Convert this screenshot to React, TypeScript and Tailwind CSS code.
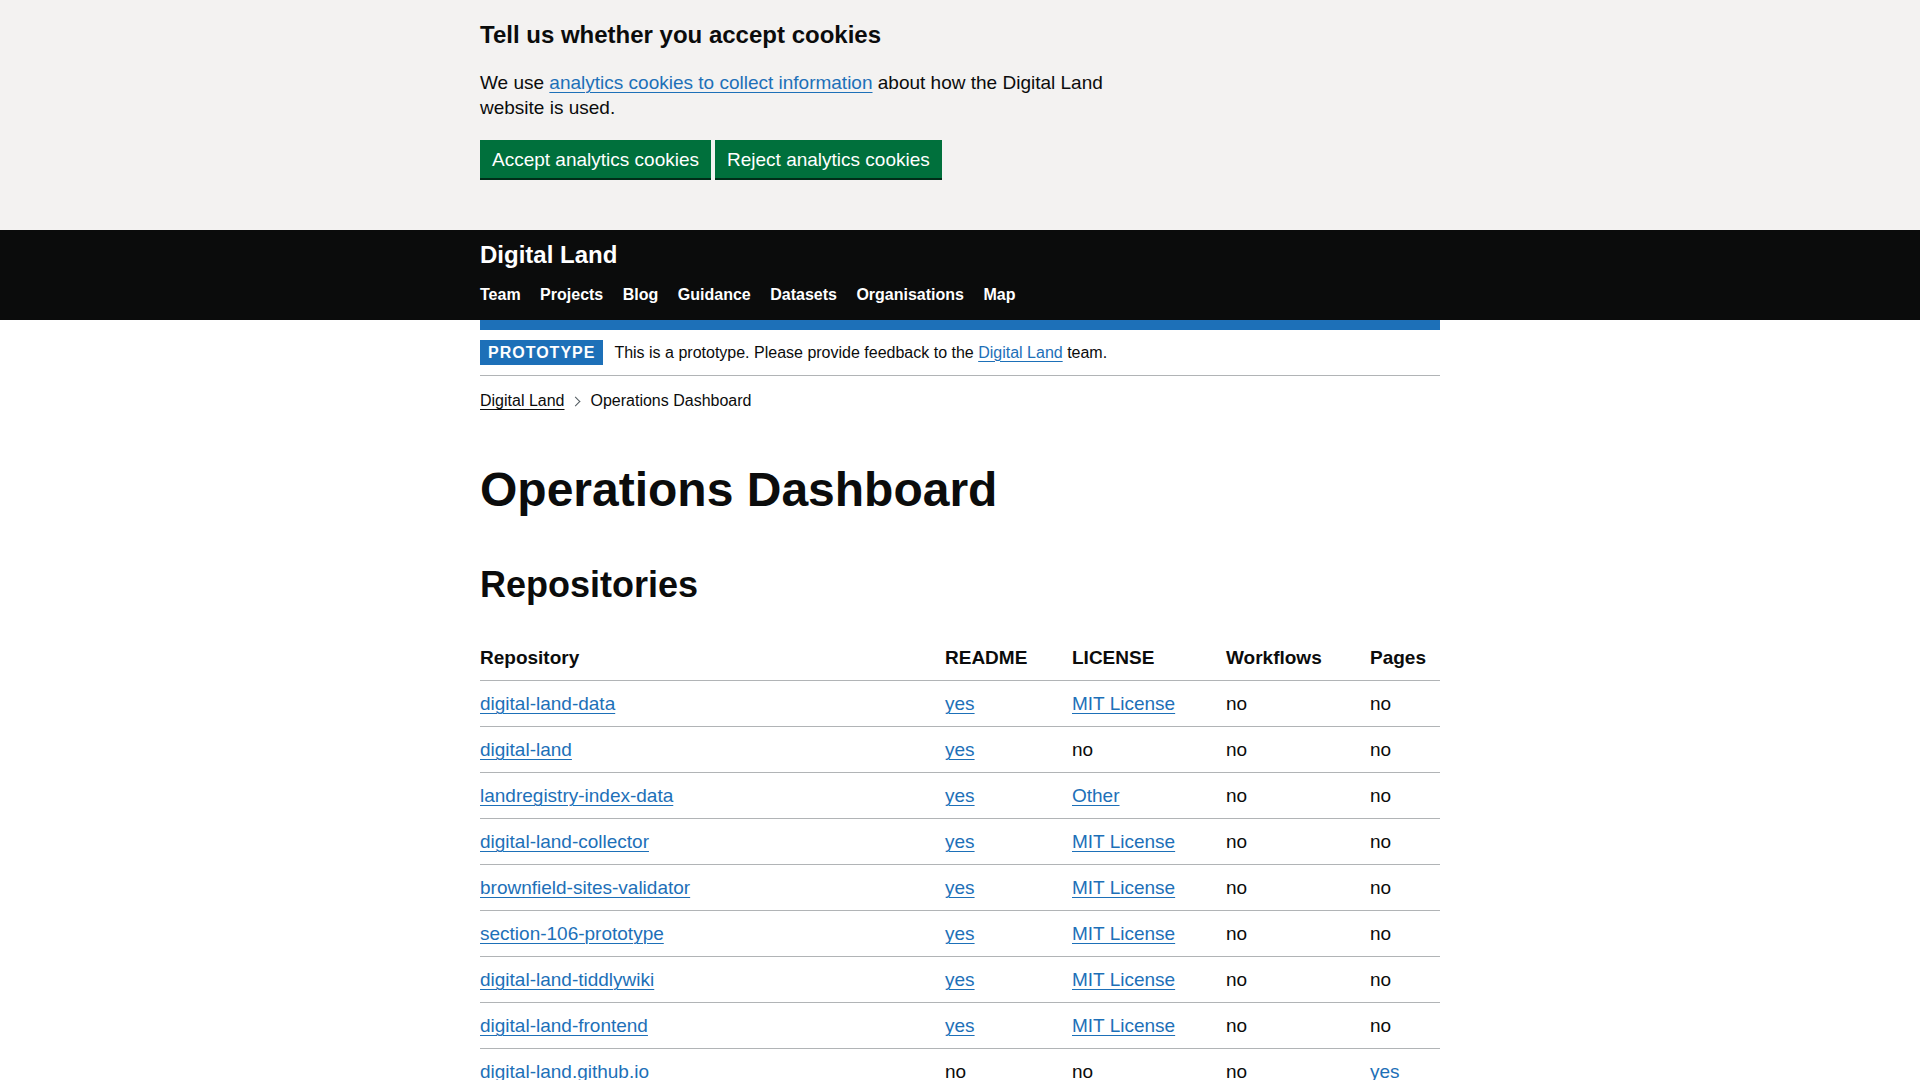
import React from "react";

type Cell = { text: string; link?: boolean };
type Row = { repo: string; readme: Cell; license: Cell; workflows: Cell; pages: Cell };

const y = (t: string): Cell => ({ text: t, link: true });
const n = (t: string): Cell => ({ text: t });

const rows: Row[] = [
  { repo: "digital-land-data", readme: y("yes"), license: y("MIT License"), workflows: n("no"), pages: n("no") },
  { repo: "digital-land", readme: y("yes"), license: n("no"), workflows: n("no"), pages: n("no") },
  { repo: "landregistry-index-data", readme: y("yes"), license: y("Other"), workflows: n("no"), pages: n("no") },
  { repo: "digital-land-collector", readme: y("yes"), license: y("MIT License"), workflows: n("no"), pages: n("no") },
  { repo: "brownfield-sites-validator", readme: y("yes"), license: y("MIT License"), workflows: n("no"), pages: n("no") },
  { repo: "section-106-prototype", readme: y("yes"), license: y("MIT License"), workflows: n("no"), pages: n("no") },
  { repo: "digital-land-tiddlywiki", readme: y("yes"), license: y("MIT License"), workflows: n("no"), pages: n("no") },
  { repo: "digital-land-frontend", readme: y("yes"), license: y("MIT License"), workflows: n("no"), pages: n("no") },
  { repo: "digital-land.github.io", readme: n("no"), license: n("no"), workflows: n("no"), pages: y("yes") },
];

const linkCls =
  "text-[#1d70b8] underline decoration-1 underline-offset-[0.1578em]";

function CellContent({ c }: { c: Cell }) {
  return c.link ? <a href="#" className={linkCls}>{c.text}</a> : <span>{c.text}</span>;
}

const tdCls = "py-[10px] pr-[20px] text-left align-top border-b border-[#b1b4b6]";

export default function App() {
  return (
    <div className="min-h-screen bg-white text-[#0b0c0c] font-['Liberation_Sans',Arial,sans-serif]">
      {/* Cookie banner */}
      <div className="bg-[#f3f2f1] pt-[20px] pb-[20px]">
        <div className="w-[960px] mx-auto">
          <div className="max-w-[630px]">
            <h2 className="text-[24px] leading-[30px] font-bold mb-[20px]">
              Tell us whether you accept cookies
            </h2>
            <p className="text-[19px] leading-[25px] mb-[20px]">
              We use{" "}
              <a href="#" className={linkCls}>
                analytics cookies to collect information
              </a>{" "}
              about how the Digital Land website is used.
            </p>
            <div className="flex gap-[4px] mb-[32px]">
              <button className="bg-[#00703c] text-white text-[19px] leading-[19px] pt-[8px] pb-[7px] px-[10px] border-2 border-transparent shadow-[0_2px_0_#002d18]">
                Accept analytics cookies
              </button>
              <button className="bg-[#00703c] text-white text-[19px] leading-[19px] pt-[8px] pb-[7px] px-[10px] border-2 border-transparent shadow-[0_2px_0_#002d18]">
                Reject analytics cookies
              </button>
            </div>
          </div>
        </div>
      </div>

      {/* Header */}
      <header className="bg-[#0b0c0c] text-white">
        <div className="w-[960px] mx-auto h-[90px] pt-[10px]">
          <a href="#" className="block text-[24px] leading-[30px] font-bold">
            Digital Land
          </a>
          <nav className="mt-[15px] flex gap-[19.5px] text-[16px] leading-[20px] font-bold">
            {["Team", "Projects", "Blog", "Guidance", "Datasets", "Organisations", "Map"].map((item) => (
              <a key={item} href="#">
                {item}
              </a>
            ))}
          </nav>
        </div>
      </header>

      <div className="w-[960px] mx-auto">
        <div className="h-[10px] bg-[#1d70b8]" />

        {/* Phase banner */}
        <div className="py-[10px] border-b border-[#b1b4b6] flex items-center">
          <strong className="bg-[#1d70b8] text-white text-[16px] leading-[16px] font-bold tracking-[1px] uppercase pt-[5px] pb-[4px] px-[8px] mr-[11px]">
            Prototype
          </strong>
          <span className="text-[16px] leading-[20px]">
            This is a prototype. Please provide feedback to the{" "}
            <a href="#" className={linkCls}>
              Digital Land
            </a>{" "}
            team.
          </span>
        </div>

        {/* Breadcrumbs */}
        <div className="mt-[15px] flex items-center text-[16px] leading-[20px]">
          <a href="#" className="text-[#0b0c0c] underline decoration-1 underline-offset-[0.1578em]">
            Digital Land
          </a>
          <span className="inline-block w-[7px] h-[7px] border-t border-r border-[#505a5f] rotate-45 ml-[7px] mr-[12px] mt-[1px]" />
          <span>Operations Dashboard</span>
        </div>

        {/* Main */}
        <main className="pt-[54px]">
          <h1 className="text-[48px] leading-[50px] font-bold mb-[50px]">Operations Dashboard</h1>
          <h2 className="text-[36px] leading-[40px] font-bold mb-[30px]">Repositories</h2>

          <table className="w-full border-collapse text-[19px] leading-[25px] table-fixed">
            <colgroup>
              <col className="w-[465px]" />
              <col className="w-[127px]" />
              <col className="w-[154px]" />
              <col className="w-[144px]" />
              <col className="w-[70px]" />
            </colgroup>
            <thead>
              <tr>
                <th className={tdCls + " font-bold"}>Repository</th>
                <th className={tdCls + " font-bold"}>README</th>
                <th className={tdCls + " font-bold"}>LICENSE</th>
                <th className={tdCls + " font-bold"}>Workflows</th>
                <th className={tdCls + " font-bold pr-0"}>Pages</th>
              </tr>
            </thead>
            <tbody>
              {rows.map((r) => (
                <tr key={r.repo}>
                  <td className={tdCls}>
                    <a href="#" className={linkCls}>
                      {r.repo}
                    </a>
                  </td>
                  <td className={tdCls}>
                    <CellContent c={r.readme} />
                  </td>
                  <td className={tdCls}>
                    <CellContent c={r.license} />
                  </td>
                  <td className={tdCls}>
                    <CellContent c={r.workflows} />
                  </td>
                  <td className={tdCls + " pr-0"}>
                    <CellContent c={r.pages} />
                  </td>
                </tr>
              ))}
            </tbody>
          </table>
        </main>
      </div>
    </div>
  );
}
